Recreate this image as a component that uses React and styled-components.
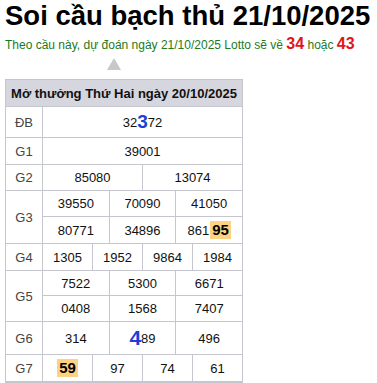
import styled, { createGlobalStyle } from "styled-components";

const GlobalStyle = createGlobalStyle`
  body {
    margin: 0;
    background: #fff;
    font-family: Arial, "Liberation Sans", sans-serif;
  }
`;

const Page = styled.div`
  padding: 0 5px;
`;

const Title = styled.h1`
  margin: 0;
  font-size: 27.5px;
  line-height: 32px;
  font-weight: bold;
  color: #000;
  white-space: nowrap;
`;

const Predict = styled.p`
  margin: 2px 0 0;
  font-size: 12px;
  line-height: 20px;
  color: #1b7a1b;
  white-space: nowrap;
`;

const Lotto = styled.b`
  color: #e0161b;
  font-size: 16px;
`;

const Arrow = styled.div`
  width: 0;
  height: 0;
  margin: 3px 0 0 102px;
  border-left: 7px solid transparent;
  border-right: 7px solid transparent;
  border-bottom: 12px solid #c8c8c8;
`;

const Board = styled.div`
  margin-top: 9px;
  width: 238px;
  display: grid;
  grid-template-columns: 36px repeat(12, 1fr);
  grid-template-rows: 26px 30px 26px 25px 25px 26px 26px 24px 25px 32px 26px;
  gap: 1px;
  padding: 1px 1px 2px;
  box-sizing: border-box;
  background: #c6c6ce;
`;

const Head = styled.div`
  grid-column: 1 / -1;
  background: #d6d6de;
  font-size: 13px;
  font-weight: bold;
  color: #111;
  display: flex;
  align-items: center;
  justify-content: center;
`;

const Label = styled.div`
  grid-row: span ${(p) => p.$rows || 1};
  background: #fff;
  font-size: 13px;
  color: #444;
  display: flex;
  align-items: center;
  justify-content: center;
`;

const Cell = styled.div`
  grid-column: span ${(p) => p.$span};
  background: #fff;
  font-size: 13px;
  color: #111;
  display: flex;
  align-items: center;
  justify-content: center;
  white-space: nowrap;
`;

const Big = styled.b`
  color: #1d3fd8;
  font-size: ${(p) => p.$size}px;
`;

const Hit = styled.b`
  display: inline-block;
  margin-left: ${(p) => (p.$gap ? 1 : 0)}px;
  padding: 0 2px;
  background: #fdd283;
  color: #000;
  font-size: 15px;
  line-height: 18px;
`;

const rows = [
  { label: "G1", span: 12, nums: ["39001"] },
  { label: "G2", span: 6, nums: ["85080", "13074"] },
];

export default function App() {
  return (
    <Page>
      <GlobalStyle />
      <Title>Soi cầu bạch thủ 21/10/2025</Title>
      <Predict>
        Theo cầu này, dự đoán ngày 21/10/2025 Lotto sẽ về <Lotto>34</Lotto> hoặc{" "}
        <Lotto>43</Lotto>
      </Predict>
      <Arrow />
      <Board>
        <Head>Mở thưởng Thứ Hai ngày 20/10/2025</Head>

        <Label>ĐB</Label>
        <Cell $span={12}>
          32<Big $size={19}>3</Big>72
        </Cell>

        {rows.map((r) => [
          <Label key={r.label}>{r.label}</Label>,
          ...r.nums.map((n, i) => (
            <Cell key={r.label + i} $span={r.span}>
              {n}
            </Cell>
          )),
        ])}

        <Label $rows={2}>G3</Label>
        <Cell $span={4}>39550</Cell>
        <Cell $span={4}>70090</Cell>
        <Cell $span={4}>41050</Cell>
        <Cell $span={4}>80771</Cell>
        <Cell $span={4}>34896</Cell>
        <Cell $span={4}>
          861<Hit $gap>95</Hit>
        </Cell>

        <Label>G4</Label>
        <Cell $span={3}>1305</Cell>
        <Cell $span={3}>1952</Cell>
        <Cell $span={3}>9864</Cell>
        <Cell $span={3}>1984</Cell>

        <Label $rows={2}>G5</Label>
        <Cell $span={4}>7522</Cell>
        <Cell $span={4}>5300</Cell>
        <Cell $span={4}>6671</Cell>
        <Cell $span={4}>0408</Cell>
        <Cell $span={4}>1568</Cell>
        <Cell $span={4}>7407</Cell>

        <Label>G6</Label>
        <Cell $span={4}>314</Cell>
        <Cell $span={4}>
          <Big $size={21}>4</Big>89
        </Cell>
        <Cell $span={4}>496</Cell>

        <Label>G7</Label>
        <Cell $span={3}>
          <Hit>59</Hit>
        </Cell>
        <Cell $span={3}>97</Cell>
        <Cell $span={3}>74</Cell>
        <Cell $span={3}>61</Cell>
      </Board>
    </Page>
  );
}
